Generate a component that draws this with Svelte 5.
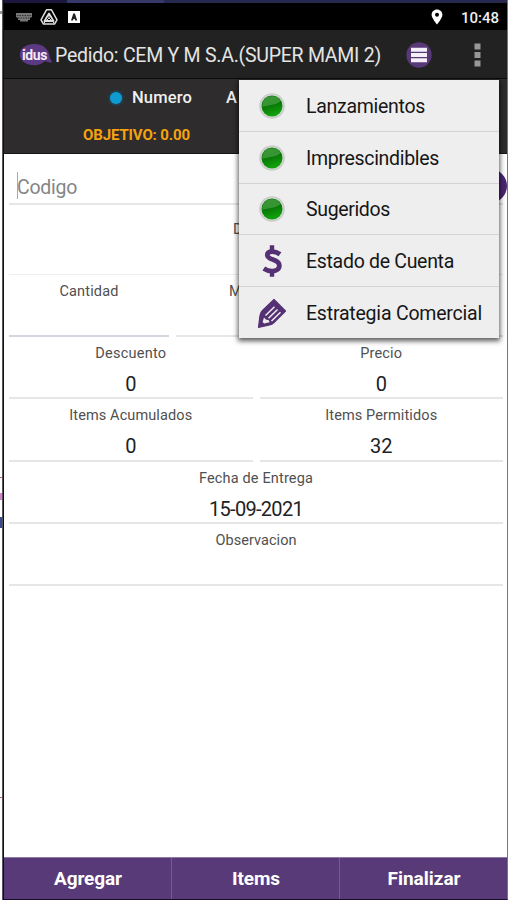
<script>
  const menu = [
    { icon: 'green', text: 'Lanzamientos', w: 119 },
    { icon: 'green', text: 'Imprescindibles', w: 133 },
    { icon: 'green', text: 'Sugeridos', w: 84 },
    { icon: 'dollar', text: 'Estado de Cuenta', w: 148 },
    { icon: 'pencil', text: 'Estrategia Comercial', w: 176 }
  ];
  const rows = [
    [{ label: 'Descuento', value: '0', w: 71 }, { label: 'Precio', value: '0', w: 42 }],
    [{ label: 'Items Acumulados', value: '0', w: 123 }, { label: 'Items Permitidos', value: '32', w: 112 }],
    [{ label: 'Fecha de Entrega', value: '15-09-2021', w: 114 }],
    [{ label: 'Observacion', value: '', w: 81 }]
  ];
  const actions = [
    { text: 'Agregar', w: 68 },
    { text: 'Items', w: 48 },
    { text: 'Finalizar', w: 73 }
  ];

  // Spreads the glyphs of a label evenly over a given width.
  function fit(node, width) {
    if (!width) return;
    const natural = node.getBoundingClientRect().width;
    const gap = (width - natural) / node.textContent.length;
    node.style.letterSpacing = `${gap}px`;
  }
</script>

<div class="screen">
  <div class="edge">
    <i style="top:11px;height:3px;background:#999"></i>
    <i style="top:477px;height:1px;background:#c55a72"></i>
    <i style="top:493px;height:7px;background:#d384cf"></i>
    <i style="top:517px;height:11px;background:#394a91"></i>
    <i style="top:797px;height:1px;background:#c55a72"></i>
  </div>
  <div class="phone">
    <div class="topline"></div>
    <div class="status">
      <svg width="70" height="20" viewBox="0 0 70 20" class="sicons">
        <path d="M0 4h16v4l-2 1v2H12v1.500H4V11H2V9L0 8z" fill="#777" />
        <path d="M1 6.500h14M2 9h12" stroke="#333" stroke-width="1" stroke-dasharray="1.500 1" />
        <g fill="none" stroke="#ddd" stroke-linejoin="round">
          <path d="M30.500 0.800h5l5.500 10-2.500 4.200h-11l-2.500-4.200z" stroke-width="1.500" />
          <path d="M33 4.500l4.500 7.500h-9z" stroke-width="1.800" />
          <path d="M28 14l5-5 5 5M33 4v5" stroke-width="1" />
        </g>
        <rect x="52" y="2" width="12" height="12" fill="#fff" />
        <path d="M55 11.500l2.300-7h1.600l2.300 7h-2l-.4-1.500h-1.400l-.4 1.500z" fill="#222" />
      </svg>
      <div class="sright">
        <svg width="12" height="16" viewBox="0 0 12 16">
          <path fill-rule="evenodd" fill="#fff" d="M6 0.500c-3.100 0-5.400 2.300-5.400 5.300C.6 9.300 6 15.500 6 15.500s5.400-6.200 5.400-9.700C11.400 2.800 9.100.5 6 .5zM6 3.800a2 2 0 1 1 0 4 2 2 0 0 1 0-4z" />
        </svg>
        <span class="clock" use:fit={38}>10:48</span>
      </div>
    </div>

    <div class="header">
      <div class="logo">
        <svg width="34" height="24" viewBox="0 0 34 24">
          <path d="M15.500 1C23 1 28.500 5 30 11c.8 4 1.500 6 3.500 8.300-3 .5-5.500-.2-7.500-1.300-2.600 2.700-6.200 4.200-10.500 4.200C7 22.200.8 18 .8 11.700S7 1 15.500 1z" fill="#5c3a83" />
          <circle cx="5.500" cy="6.500" r="1.200" fill="#d84a94" />
        </svg>
        <b><span use:fit={25}>idus</span></b>
      </div>
      <h1><span use:fit={326}>Pedido: CEM Y M S.A.(SUPER MAMI 2)</span></h1>
      <svg class="list" width="26" height="26" viewBox="0 0 26 26">
        <circle cx="13" cy="13" r="12.700" fill="#573977" />
        <path d="M5 7.800h16M5 13h16M5 18.200h16" stroke="#f5f0f8" stroke-width="4" />
      </svg>
      <svg class="dots" width="8" height="26" viewBox="0 0 8 26">
        <path d="M.5 1.500h6v6h-6zM.5 10h6v6h-6zM.5 18.500h6v6h-6z" fill="#989898" />
      </svg>
    </div>

    <div class="filters">
      <div class="radios">
        <i class="dot"></i>
        <span class="numero"><span use:fit={60}>Numero</span></span>
        <span>A</span>
      </div>
      <div class="goal"><span use:fit={107}>OBJETIVO: 0.00</span></div>
    </div>

    <div class="form">
      <div class="codigo line"><i class="caret"></i><span use:fit={60}>Codigo</span><i class="round"></i></div>
      <div class="field line desc"><span class="label">D</span></div>
      <div class="row">
        <div class="field line focus cant"><span class="label"><span use:fit={59}>Cantidad</span></span></div>
        <div class="field line rest"><span class="label">M</span></div>
      </div>
      {#each rows as row}
        <div class="row">
          {#each row as f}
            <div class="field line">
              <span class="label"><span use:fit={f.w}>{f.label}</span></span>
              <span class="value"><span use:fit={f.value.length > 2 ? 94 : 0}>{f.value}</span></span>
            </div>
          {/each}
        </div>
      {/each}
    </div>

    <div class="actions">
      {#each actions as a}
        <button><span use:fit={a.w}>{a.text}</span></button>
      {/each}
    </div>
  </div>

  <div class="menu">
    {#each menu as m}
      <div class="item">
        <div class="icon">
          {#if m.icon === 'green'}
            <svg width="28" height="28" viewBox="0 0 28 28">
              <defs>
                <linearGradient id="g" x1="0" y1="0" x2="0.3" y2="1">
                  <stop offset="0" stop-color="#1c7d1b" />
                  <stop offset="0.5" stop-color="#087406" />
                  <stop offset="1" stop-color="#10a00b" />
                </linearGradient>
              </defs>
              <circle cx="14" cy="14" r="12.800" fill="#c8cbc8" />
              <circle cx="14" cy="14" r="11.400" fill="#d3dad3" />
              <circle cx="14" cy="14" r="10.500" fill="url(#g)" />
              <path d="M4.300 15C4 8 8.500 4.300 14 4.300c4 0 7 2 8.600 4.700C18 13.500 11 12.500 4.300 15z" fill="#46a042" opacity=".75" />
            </svg>
          {:else if m.icon === 'dollar'}
            <svg width="28" height="34" viewBox="0 0 28 34">
              <path d="M22 10.300C19.500 8.500 17 7.600 14.300 7.600c-3.300 0-5 1.400-5 3.400 0 5.600 12 3.600 12 10.700 0 3.400-3 5.400-7.200 5.400-3 0-5.700-.8-8.300-2.600" fill="none" stroke="#553174" stroke-width="4.800" />
              <path d="M11.800 1.200h4.400V8h-4.400zM11.800 26h4.400v6.800h-4.400z" fill="#553174" />
            </svg>
          {:else}
            <svg width="30" height="30" viewBox="0 0 30 30">
              <path d="M17 1.500L28.500 13 17 24.500Q15 26.500 12.500 27L1.500 29.300 3 17.500Q3.400 14.500 5.500 12.500z" fill="#553174" stroke="#553174" stroke-width="1.200" stroke-linejoin="round" />
              <path d="M7 19.500l1.800 2 3 .8 .8 2-5.500 1.300-1.500-1.500z" fill="#eee" />
              <path d="M8.500 17.500L17.500 8.800M11.500 20.300L20.500 11.500M14.500 23L23.500 14.200" stroke="#eee" stroke-width="1.500" />
            </svg>
          {/if}
        </div>
        <span class="text" use:fit={m.w}>{m.text}</span>
      </div>
    {/each}
  </div>
</div>

<style>
  :global(body) { margin: 0; background: #fff; }
  .screen {
    position: relative; width: 508px; height: 900px; overflow: hidden; box-sizing: border-box;
    display: flex; font-family: Roboto, 'Liberation Sans', sans-serif; background: #fff;
  }
  .screen * { box-sizing: border-box; white-space: nowrap; }
  .edge { position: relative; flex: 0 0 3px; }
  .edge i { position: absolute; left: 0; width: 2px; }
  .phone {
    flex: 1; display: flex; flex-direction: column; min-width: 0;
    border-left: 1px solid #101010; border-right: 1px solid #777; border-bottom: 1px solid #180c26;
    box-shadow: -1px 0 0 #55555a;
  }
  .topline { height: 3px; background: linear-gradient(90deg, #1c173d 63px, #353868 63px, #353868 160px, #26284f 160px); }
  .status { height: 27px; background: #000; display: flex; justify-content: space-between; padding: 6px 8px 0 12px; }
  .sright { display: flex; gap: 18px; align-items: flex-start; }
  .clock { font-size: 15px; line-height: 18px; padding-top: 0; color: #eee; font-weight: 500; }
  .header { height: 49px; background: #222; border-bottom: 1px solid #0c0c0c; display: flex; align-items: center; padding: 2px 0 0 15px; }
  .logo { position: relative; width: 34px; height: 24px; margin-right: 2px; }
  .logo b { position: absolute; left: 3px; top: 4px; font-size: 14px; line-height: 16px; color: #f2e9f5; }
  h1 { margin: 0; width: 350px; font-size: 19.500px; font-weight: 400; color: #e4e4e4; }
  .list { margin-left: 1px; }
  .dots { margin-left: 42px; }
  .filters { height: 75px; background: #2e2c2d; border-bottom: 1px solid #151515; color: #f0f0f0; }
  .radios { display: flex; align-items: center; height: 37px; padding-left: 106px; font-size: 16.500px; font-weight: 500; }
  .dot { width: 12px; height: 12px; border-radius: 50%; background: #109bd0; box-shadow: 0 0 3px 1px #17526c; }
  .numero { margin-left: 10px; width: 94px; }
  .goal { padding: 1px 0 0 79px; line-height: 37px; font-size: 15px; font-weight: 700; color: #f5a30e; }
  .form { flex: 1; padding: 0 4px 0 5px; }
  .line { border-bottom: 2px solid #e6e6e6; }
  .codigo { position: relative; height: 51px; margin-bottom: 8px; padding: 18px 0 0 8px; display: flex; font-size: 19.500px; line-height: 31px; color: #858585; }
  .caret { width: 1px; height: 27px; background: #aaa; margin-right: -1px; }
  .round { position: absolute; right: -4px; top: 15px; width: 34px; height: 34px; border-radius: 50%; background: #4a2473; }
  .row { display: flex; gap: 7px; }
  .field { flex: 1; height: 62.200px; display: flex; flex-direction: column; align-items: center; }
  .label { font-size: 14.500px; line-height: 18px; margin-top: 8px; color: #505050; }
  .value { font-size: 20px; line-height: 24px; margin-top: 9px; color: #222; }
  .desc { height: 62px; align-items: flex-start; padding-left: 224px; border-bottom: 1px solid #eee; }
  .cant { flex: 0 0 160px; }
  .focus { border-bottom-color: #d5d5e0; }
  .rest { align-items: flex-start; padding-left: 53px; }
  .actions { height: 42px; display: flex; background: #593a78; border-top: 1px solid #8d79a2; }
  button { flex: 1; border: 0; border-right: 1px solid #755b90; background: none; padding: 0 0 0 1px; font: 700 19px Roboto, sans-serif; color: #fff; }
  button:last-child { border-right: 0; }
  .menu {
    position: absolute; left: 239px; top: 80px; width: 260px; height: 258px; background: #eee;
    display: flex; flex-direction: column; box-shadow: 0 2px 5px 1px rgba(0, 0, 0, .65);
  }
  .item { flex: 1; display: flex; align-items: center; border-bottom: 1px solid #d3d3d3; font-size: 19.500px; color: #161616; }
  .item:last-child { border-bottom: 0; }
  .icon { width: 67px; display: flex; justify-content: center; padding: 1px 2px 0 0; }
  .text { padding-top: 2px; }
</style>
